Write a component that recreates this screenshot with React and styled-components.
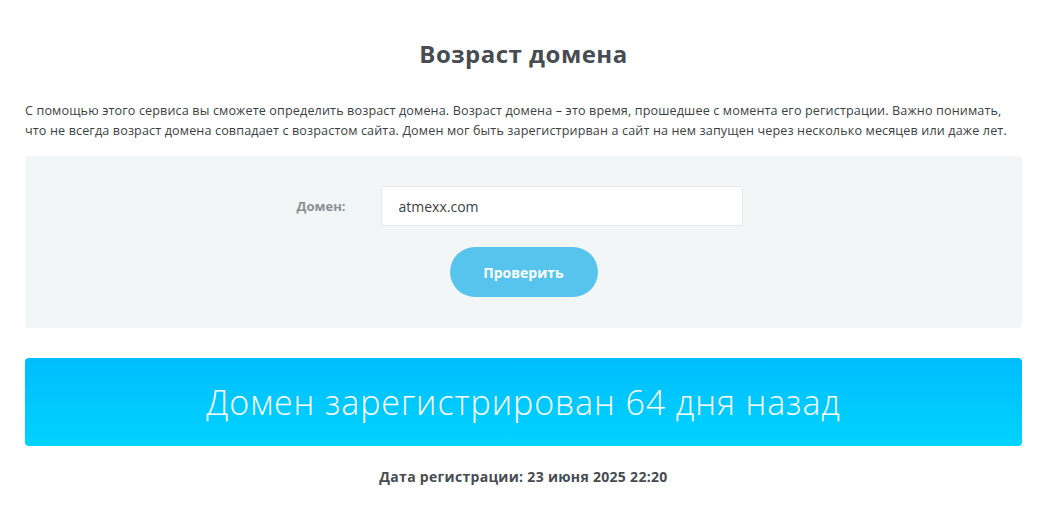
import React, { useState } from "react";
import styled, { createGlobalStyle } from "styled-components";

const GlobalStyle = createGlobalStyle`
  * { box-sizing: border-box; }
  body {
    margin: 0;
    background: #fff;
    font-family: "Open Sans", "Noto Sans", sans-serif;
  }
`;

const Page = styled.div`
  padding: 36px 24px 30px 25px;
`;

const Title = styled.h1`
  margin: 0 0 29px;
  text-align: center;
  font-family: "Open Sans", sans-serif;
  font-weight: 700;
  font-size: 24px;
  line-height: 36px;
  letter-spacing: 0.5px;
  color: #474c52;
`;

const Intro = styled.p`
  margin: 0 0 15px;
  font-family: "Open Sans", sans-serif;
  font-size: 12.6px;
  line-height: 20px;
  letter-spacing: 0.13px;
  color: #3b3f44;
`;

const FormPanel = styled.form`
  background: #f3f6f7;
  border-radius: 4px;
  padding: 30px 0 31px;
  display: flex;
  flex-direction: column;
  align-items: center;
  gap: 21px;
`;

const FieldRow = styled.div`
  display: flex;
  align-items: center;
  margin-left: -8px;
`;

const Label = styled.label`
  width: 84px;
  font-family: "Open Sans", sans-serif;
  font-weight: 700;
  font-size: 13px;
  color: #8c8f92;
`;

const Input = styled.input`
  width: 362px;
  height: 40px;
  border: 1px solid #e6e9eb;
  border-radius: 2px;
  background: #fff;
  padding: 0 17px;
  font-family: "Open Sans", sans-serif;
  font-size: 14px;
  color: #3b3f44;
  outline: none;
`;

const Button = styled.button`
  width: 148px;
  height: 50px;
  border: none;
  border-radius: 25px;
  background: #56c4ec;
  color: #fff;
  font-family: "Open Sans", sans-serif;
  font-weight: 700;
  font-size: 14px;
  cursor: pointer;
`;

const Result = styled.div`
  margin-top: 30px;
  height: 88px;
  border-radius: 4px;
  background: linear-gradient(180deg, #00bdfe 0%, #00d3fe 100%);
  display: flex;
  align-items: center;
  justify-content: center;
  color: #fff;
  font-family: "Open Sans", sans-serif;
  font-weight: 300;
  font-size: 34px;
  letter-spacing: 0.9px;
`;

const DateLine = styled.div`
  margin-top: 21px;
  text-align: center;
  font-family: "Open Sans", sans-serif;
  font-weight: 700;
  font-size: 14px;
  letter-spacing: 0.3px;
  color: #474c52;
`;

export default function App() {
  const [domain, setDomain] = useState("atmexx.com");
  return (
    <Page>
      <GlobalStyle />
      <Title>Возраст домена</Title>
      <Intro>
        С помощью этого сервиса вы сможете определить возраст домена. Возраст домена – это время, прошедшее с момента его регистрации. Важно понимать, что не всегда возраст домена совпадает с возрастом сайта. Домен мог быть зарегистрирван а сайт на нем запущен через несколько месяцев или даже лет.
      </Intro>
      <FormPanel onSubmit={e => e.preventDefault()}>
        <FieldRow>
          <Label htmlFor="domain">Домен:</Label>
          <Input id="domain" value={domain} onChange={e => setDomain(e.target.value)} />
        </FieldRow>
        <Button type="submit">Проверить</Button>
      </FormPanel>
      <Result>Домен зарегистрирован 64 дня назад</Result>
      <DateLine>Дата регистрации: 23 июня 2025 22:20</DateLine>
    </Page>
  );
}
